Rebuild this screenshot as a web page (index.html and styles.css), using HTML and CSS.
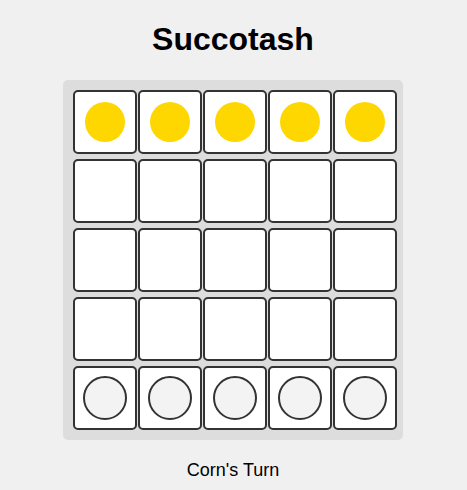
FILE: index.html
```html
<!DOCTYPE html>
<html>
<head>
<meta charset="utf-8">
<link rel="stylesheet" href="styles.css">
</head>
<body>
<div class="app">
  <h1 class="title">Succotash</h1>
  <div class="board">
    <div class="cell"><span class="piece corn"></span></div>
    <div class="cell"><span class="piece corn"></span></div>
    <div class="cell"><span class="piece corn"></span></div>
    <div class="cell"><span class="piece corn"></span></div>
    <div class="cell"><span class="piece corn"></span></div>
    <div class="cell"></div><div class="cell"></div><div class="cell"></div><div class="cell"></div><div class="cell"></div>
    <div class="cell"></div><div class="cell"></div><div class="cell"></div><div class="cell"></div><div class="cell"></div>
    <div class="cell"></div><div class="cell"></div><div class="cell"></div><div class="cell"></div><div class="cell"></div>
    <div class="cell"><span class="piece bean"></span></div>
    <div class="cell"><span class="piece bean"></span></div>
    <div class="cell"><span class="piece bean"></span></div>
    <div class="cell"><span class="piece bean"></span></div>
    <div class="cell"><span class="piece bean"></span></div>
  </div>
  <p class="status">Corn's Turn</p>
</div>
</body>
</html>
```
FILE: styles.css
```css
html, body {
  background: #f0f0f0;
}
body {
  margin: 0;
  font-family: "Liberation Sans", Arial, sans-serif;
  color: #000;
}
.app {
  display: flex;
  flex-direction: column;
  align-items: center;
  padding-right: 1px;
}
.title {
  font-size: 32px;
  font-weight: bold;
  margin: 21px 0 22px;
  line-height: 37px;
}
.board {
  width: 340px;
  box-sizing: border-box;
  background: #dddddd;
  border-radius: 5px;
  padding: 10px 6px 10px 10px;
  display: grid;
  grid-template-columns: repeat(5, 64px);
  grid-auto-rows: 64px;
  column-gap: 1px;
  row-gap: 5px;
}
.cell {
  box-sizing: border-box;
  background: #fff;
  border: 2px solid #333;
  border-radius: 5px;
  display: flex;
  align-items: center;
  justify-content: center;
}
.piece {
  display: block;
  border-radius: 50%;
  box-sizing: border-box;
}
.corn {
  width: 40px;
  height: 40px;
  background: #ffd700;
}
.bean {
  width: 44px;
  height: 44px;
  background: #f3f3f3;
  border: 2px solid #333;
}
.status {
  margin: 20px 0 0;
  font-size: 18px;
  line-height: 21px;
}
```
